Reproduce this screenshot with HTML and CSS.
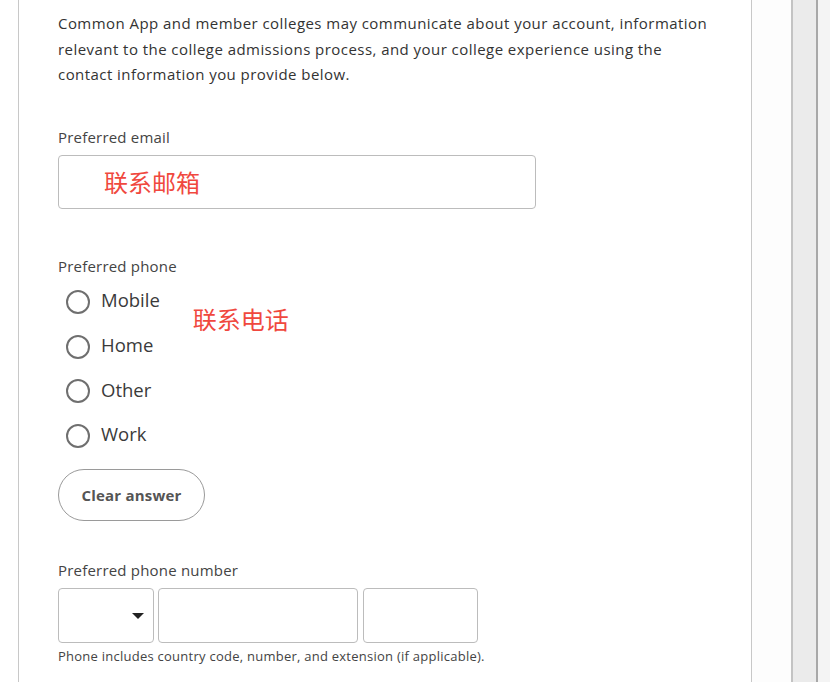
FILE: index.html
```html
<!DOCTYPE html>
<html>
<head>
<meta charset="utf-8">
<link rel="stylesheet" href="styles.css">
</head>
<body>
<div class="page">
  <div class="card">
    <p class="intro">Common App and member colleges may communicate about your account, information relevant to the college admissions process, and your college experience using the contact information you provide below.</p>

    <div class="field email-field">
      <div class="label">Preferred email</div>
      <div class="input email-input"><span class="note">联系邮箱</span></div>
    </div>

    <div class="field phone-field">
      <div class="label">Preferred phone</div>
      <div class="radio-area">
        <div class="radios">
          <div class="radio-row"><span class="radio"></span><span class="radio-label">Mobile</span></div>
          <div class="radio-row"><span class="radio"></span><span class="radio-label">Home</span></div>
          <div class="radio-row"><span class="radio"></span><span class="radio-label">Other</span></div>
          <div class="radio-row"><span class="radio"></span><span class="radio-label">Work</span></div>
        </div>
        <span class="note phone-note">联系电话</span>
      </div>
      <button class="clear-btn">Clear answer</button>
    </div>

    <div class="field number-field">
      <div class="label">Preferred phone number</div>
      <div class="number-row">
        <div class="input code-input"><span class="caret"></span></div>
        <div class="input num-input"></div>
        <div class="input ext-input"></div>
      </div>
      <div class="help">Phone includes country code, number, and extension (if applicable).</div>
    </div>
  </div>
  <div class="gap"></div>
  <div class="scroll-track"></div>
  <div class="scroll-edge"></div>
</div>
</body>
</html>
```

FILE: styles.css
```css
* { box-sizing: border-box; }
html, body { margin: 0; padding: 0; background: #fff; }
body {
  font-family: "Open Sans", "Noto Sans", sans-serif;
  color: #333;
  width: 830px;
  height: 682px;
  overflow: hidden;
}
.page {
  display: flex;
  height: 682px;
  padding-left: 18px;
}
.card {
  width: 734px;
  flex: none;
  border-left: 1px solid #c8c8c8;
  border-right: 1px solid #c8c8c8;
  padding: 11px 0 0 39px;
}
.gap { width: 39px; flex: none; background: #fdfdfd; }
.scroll-track {
  width: 27px;
  flex: none;
  background: #ebebeb;
  border-left: 2px solid #c3c3c3;
  border-right: 2px solid #a8a8a8;
}
.scroll-edge { flex: 1; background: #f4f4f4; }

.intro {
  margin: 0;
  font-size: 15px;
  letter-spacing: 0.45px;
  line-height: 25.5px;
  width: 655px;
  color: #333;
}
.label {
  font-size: 15px;
  letter-spacing: 0.2px;
  line-height: 20px;
  color: #444;
}
.field { display: flex; flex-direction: column; }
.email-field { margin-top: 39px; }
.input {
  border: 1px solid #bcbcbc;
  border-radius: 4px;
  background: #fff;
}
.email-input {
  margin-top: 8px;
  width: 478px;
  height: 54px;
  display: flex;
  align-items: center;
  padding-left: 45px;
}
.note {
  font-family: "Noto Sans CJK SC", sans-serif;
  color: #f0483e;
  font-size: 24px;
  line-height: 30px;
}
.phone-field { margin-top: 47px; }
.radio-area { display: flex; align-items: flex-start; }
.radios {
  display: flex;
  flex-direction: column;
  padding-left: 8px;
  margin-top: 4px;
}
.radio-row {
  display: flex;
  align-items: center;
  height: 44.7px;
  gap: 11px;
}
.radio {
  width: 24px;
  height: 24px;
  border: 2px solid #6f6f6f;
  border-radius: 50%;
  background: #fff;
  flex: none;
}
.radio-label {
  font-size: 18.5px;
  color: #3a3a3a;
  position: relative;
  top: -2px;
}
.phone-note { margin-left: 33px; margin-top: 28px; }
.clear-btn {
  align-self: flex-start;
  margin-top: 11px;
  width: 147px;
  height: 52px;
  border: 1px solid #9a9a9a;
  border-radius: 26px;
  background: #fff;
  font-family: "Open Sans", sans-serif;
  font-weight: 700;
  font-size: 15px;
  letter-spacing: 0.2px;
  color: #555;
  padding: 0;
}
.number-field { margin-top: 39px; }
.number-row {
  display: flex;
  margin-top: 8px;
}
.number-row .input { height: 55px; }
.code-input {
  width: 96px;
  position: relative;
}
.caret {
  position: absolute;
  left: 73px;
  top: 24px;
  width: 0;
  height: 0;
  border-left: 6px solid transparent;
  border-right: 6px solid transparent;
  border-top: 6px solid #222;
}
.num-input { width: 200px; margin-left: 4px; }
.ext-input { width: 115px; margin-left: 5px; }
.help {
  font-size: 13px;
  letter-spacing: 0.25px;
  color: #444;
  margin-top: 4px;
  line-height: 18px;
}
```
